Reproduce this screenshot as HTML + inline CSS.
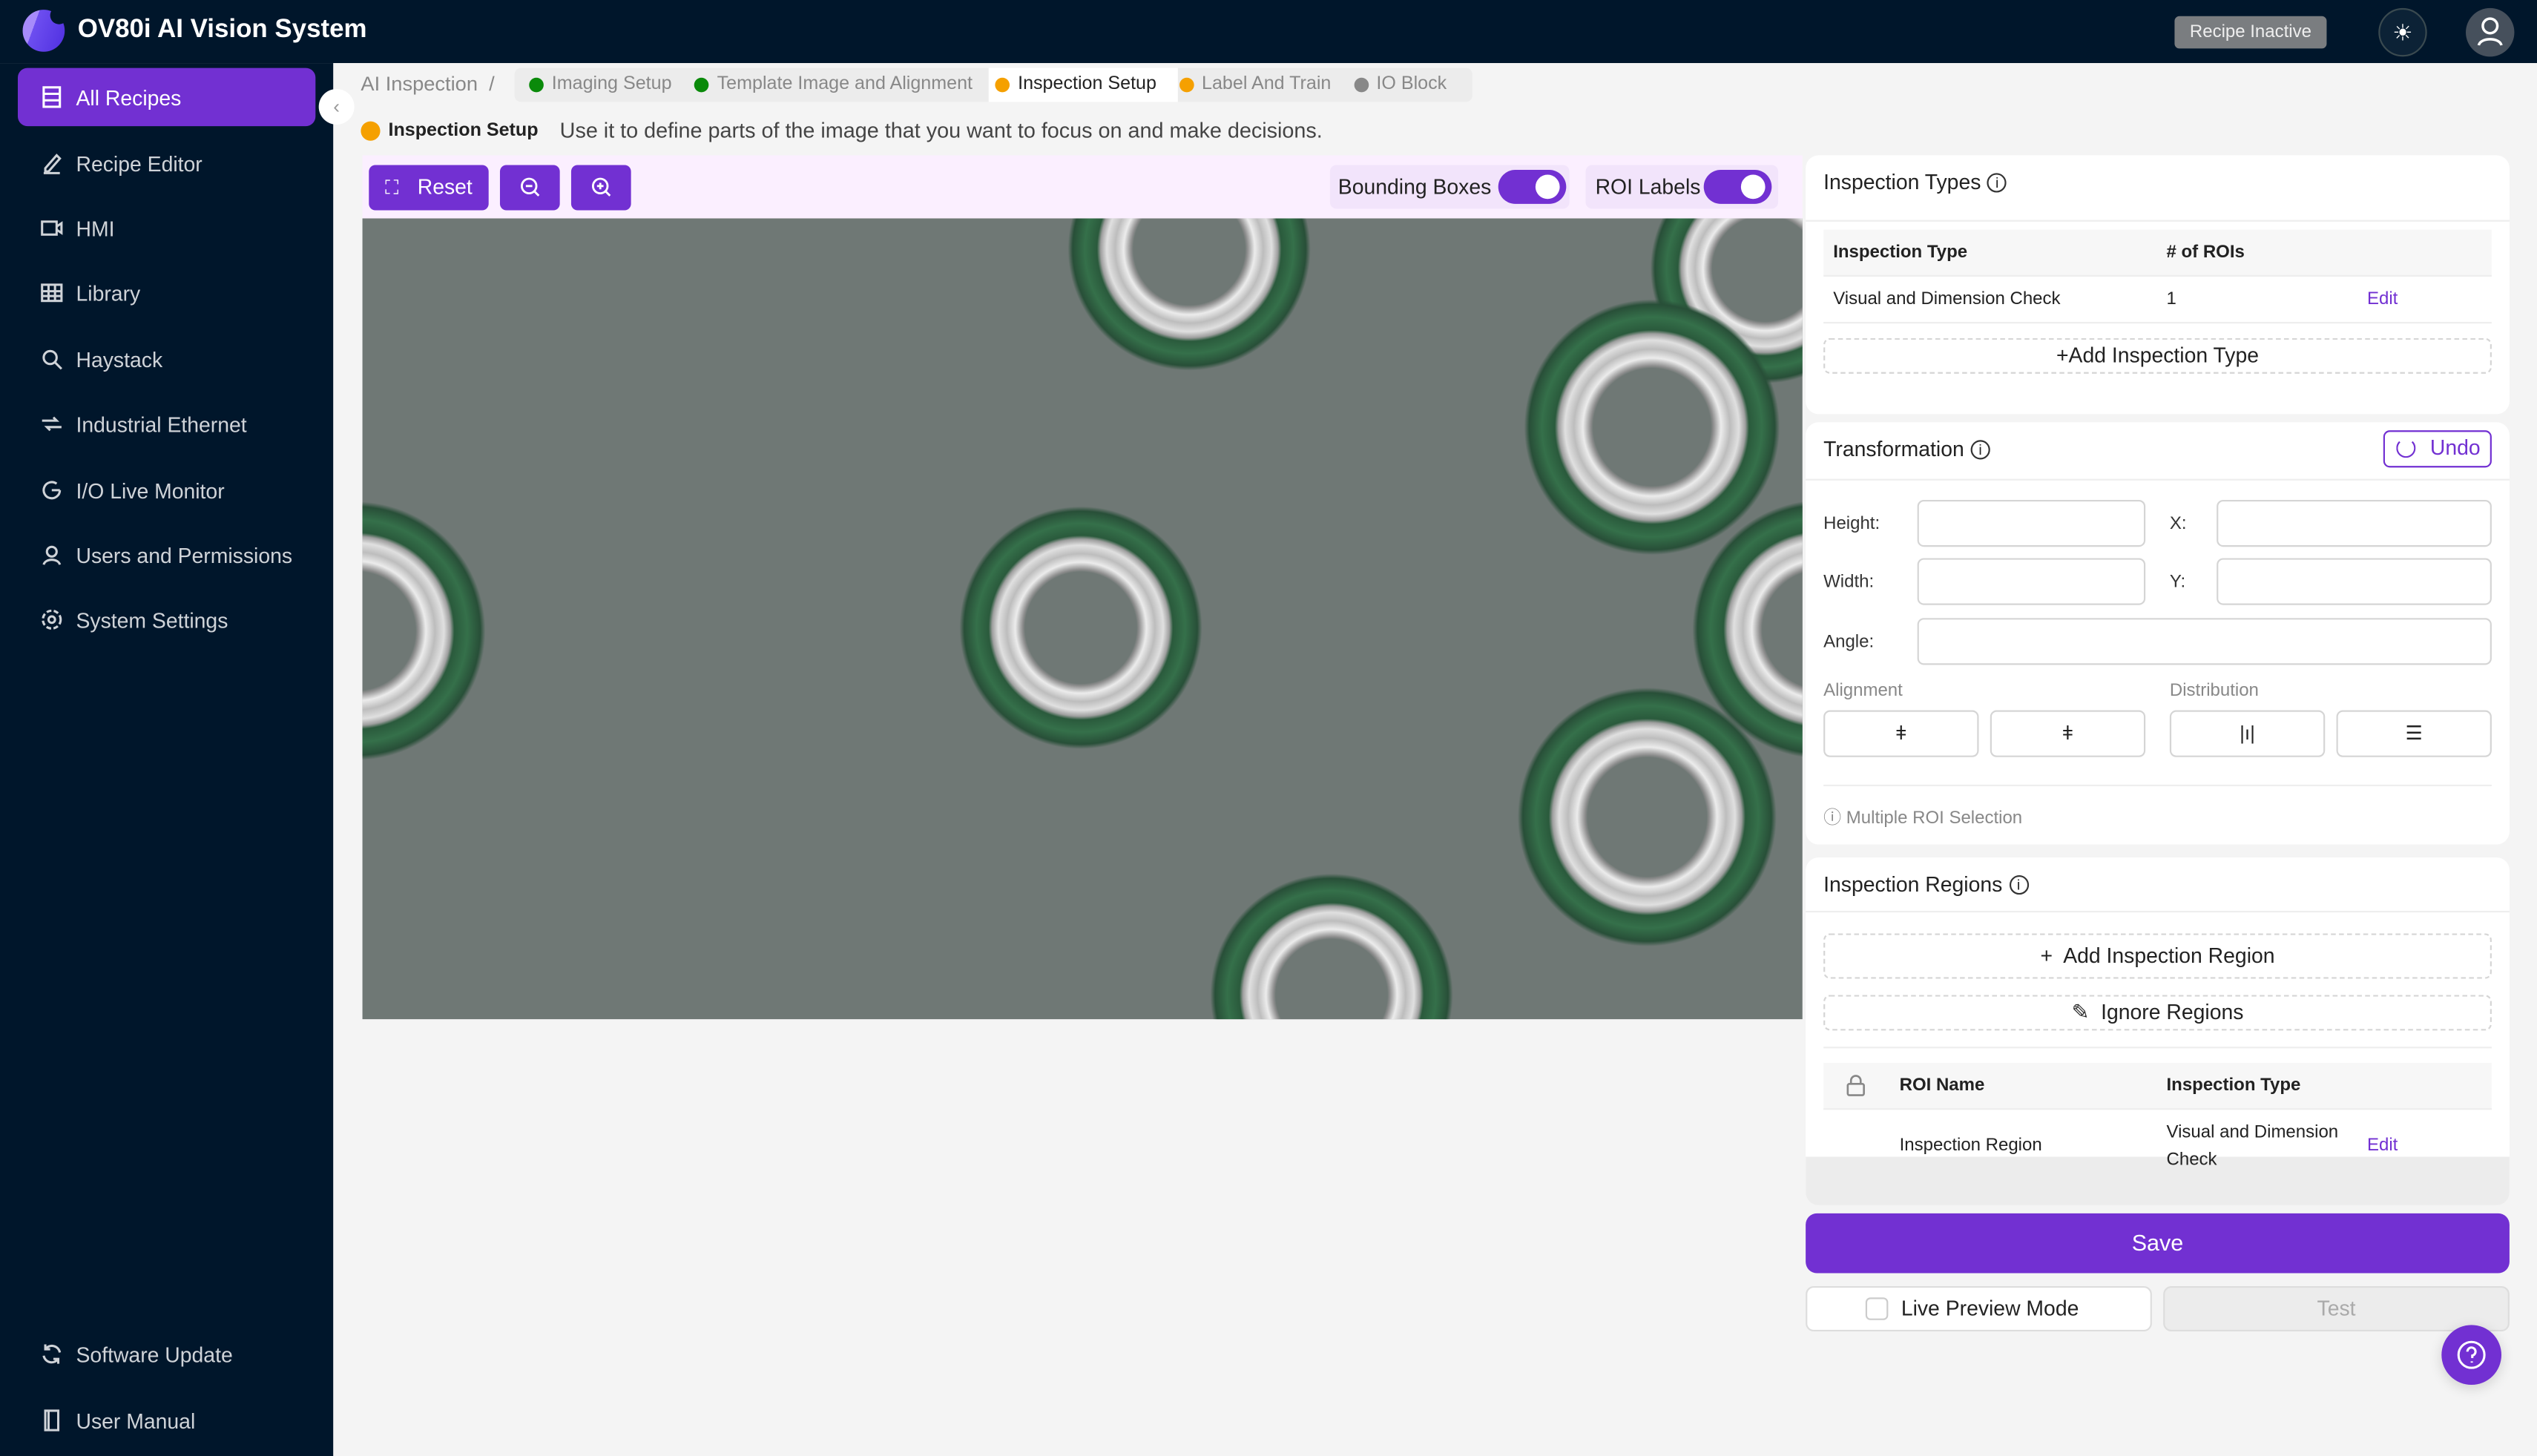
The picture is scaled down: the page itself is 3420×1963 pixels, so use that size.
<!DOCTYPE html>
<html><head><meta charset="utf-8"><style>
*{box-sizing:border-box;margin:0;padding:0}
html,body{width:3420px;height:1962px;overflow:hidden;background:#f4f4f4}
#w{position:absolute;left:0;top:0;width:1568px;height:900px;transform:scale(2.18112);transform-origin:0 0;font-family:"Liberation Sans",sans-serif;color:#222;background:#f4f4f4}
.a{position:absolute}
.top{left:0;top:0;width:1568px;height:39px;background:#00162b}
.side{left:0;top:39px;width:206px;height:861px;background:#00162b}
.nav{position:absolute;left:11px;width:184px;height:36px;border-radius:6px;color:#cfd3d8;font-size:13px;display:flex;align-items:center;padding-left:14px;gap:8px}
.nav svg{width:14px;height:14px;stroke:#cfd3d8;fill:none;stroke-width:1.4}
.card{position:absolute;background:#fff;border-radius:8px;left:1116px;width:435px}
.hd{font-size:13px;color:#222;display:flex;align-items:center;gap:4px}
.i{display:inline-block;width:12px;height:12px;border:1.2px solid #333;border-radius:50%;font-size:9px;text-align:center;line-height:10px}
.dash{position:absolute;border:1px dashed #d5d5d5;border-radius:4px;font-size:13px;text-align:center}
.inp{position:absolute;border:1px solid #d5d5d5;border-radius:4px;height:29px;background:#fff}
.lbl{position:absolute;font-size:11px;color:#333}
.btn{position:absolute;border:1px solid #d5d5d5;border-radius:4px;height:29px;background:#fff;text-align:center;font-size:12px;line-height:27px}
.ring{position:absolute;border-radius:50%;background:radial-gradient(circle closest-side,#6f7875 0 46%,#8e8e8e 48%,#ececec 54%,#bdbdbd 61%,#e0e0e0 68%,#9f9f9f 73%,#2a5a3c 76%,#35704a 86%,#284f38 96%,rgba(80,110,90,0) 100%)}
.tab{font-size:11.5px;color:#888;display:flex;align-items:center;gap:5px}
.dot{width:9px;height:9px;border-radius:50%;display:inline-block}
</style></head><body><div id="w">
<div class="a top"></div>
<div class="a" style="left:14px;top:6px;width:26px;height:26px;border-radius:50%;background:linear-gradient(110deg,#a78bfa 0 30%,#6d4ef0 30%,#4f2fe0)"></div>
<div class="a" style="left:31px;top:4px;width:11px;height:11px;border-radius:50%;background:#00162b"></div>
<div class="a" style="left:48px;top:10px;color:#fff;font-size:16px;font-weight:bold">OV80i AI Vision System</div>
<div class="a" style="left:1344px;top:10px;width:94px;height:20px;background:#7a7d80;border-radius:3px;color:#eee;font-size:11px;text-align:center;line-height:20px">Recipe Inactive</div>
<div class="a" style="left:1470px;top:5px;width:30px;height:30px;border-radius:50%;background:#0c2236;border:1px solid #3a4a50;color:#fff;text-align:center;line-height:28px;font-size:14px">☀</div>
<div class="a" style="left:1524px;top:5px;width:30px;height:30px;border-radius:50%;background:#46505c"><svg width="30" height="30" viewBox="0 0 30 30" fill="none" stroke="#fff" stroke-width="1.6"><circle cx="15" cy="11" r="4.5"/><path d="M8 23c1-5 13-5 14 0"/></svg></div>
<div class="a side"></div>
<div class="nav" style="top:42px;background:#7230d2;color:#fff"><svg viewBox="0 0 14 14" style="stroke:#fff"><rect x="2" y="1" width="10" height="12"/><path d="M2 5h10M2 9h10"/></svg>All Recipes</div>
<div class="nav" style="top:83px"><svg viewBox="0 0 14 14"><path d="M3 10l7-8 2 2-7 8H3zM2 13h10"/></svg>Recipe Editor</div>
<div class="nav" style="top:123px"><svg viewBox="0 0 14 14"><rect x="1" y="3" width="9" height="8"/><path d="M10 6l3-2v6l-3-2"/></svg>HMI</div>
<div class="nav" style="top:163px"><svg viewBox="0 0 14 14"><rect x="1" y="2" width="12" height="10"/><path d="M1 6h12M1 9h12M5 2v10M9 2v10"/></svg>Library</div>
<div class="nav" style="top:204px"><svg viewBox="0 0 14 14"><circle cx="6" cy="6" r="4"/><path d="M9 9l4 4"/></svg>Haystack</div>
<div class="nav" style="top:244px"><svg viewBox="0 0 14 14"><path d="M1 5h9l-2-2M13 9H4l2 2"/></svg>Industrial Ethernet</div>
<div class="nav" style="top:285px"><svg viewBox="0 0 14 14"><path d="M12 7a5 5 0 1 1-2-4M7 7h5"/></svg>I/O Live Monitor</div>
<div class="nav" style="top:325px"><svg viewBox="0 0 14 14"><circle cx="7" cy="5" r="3"/><path d="M2 13c1-4 9-4 10 0"/></svg>Users and Permissions</div>
<div class="nav" style="top:365px"><svg viewBox="0 0 14 14"><circle cx="7" cy="7" r="2"/><circle cx="7" cy="7" r="5.5" stroke-dasharray="3 1.5"/></svg>System Settings</div>
<div class="nav" style="top:819px"><svg viewBox="0 0 14 14"><path d="M12 6a5 5 0 0 0-9-2M2 8a5 5 0 0 0 9 2M3 1v3h3M11 13v-3H8"/></svg>Software Update</div>
<div class="nav" style="top:860px"><svg viewBox="0 0 14 14"><path d="M3 1h8v12H3zM5 1v12"/></svg>User Manual</div>
<div class="a" style="left:206px;top:39px;width:1362px;height:861px;background:#f4f4f4"></div>
<div class="a" style="left:197px;top:55px;width:22px;height:22px;border-radius:50%;background:#fff;color:#999;text-align:center;line-height:22px;font-size:12px">‹</div>
<div class="a" style="left:223px;top:45px;font-size:12.5px;color:#888">AI Inspection &nbsp;/</div>
<div class="a" style="left:318px;top:42px;width:592px;height:21px;background:#ececec;border-radius:4px"></div>
<div class="a" style="left:611px;top:42px;width:117px;height:21px;background:#fff"></div>
<div class="a" style="left:327px;top:46px;display:flex;gap:14px">
<span class="tab"><span class="dot" style="background:#0a8a0a"></span>Imaging Setup</span>
<span class="tab"><span class="dot" style="background:#0a8a0a"></span>Template Image and Alignment</span>
<span class="tab" style="color:#222"><span class="dot" style="background:#f5a000"></span>Inspection Setup</span>
<span class="tab"><span class="dot" style="background:#f5a000"></span>Label And Train</span>
<span class="tab"><span class="dot" style="background:#888"></span>IO Block</span></div>
<div class="a" style="left:223px;top:73px;font-size:12px;display:flex;align-items:center;gap:5px"><span class="dot" style="background:#f5a000;width:12px;height:12px"></span><b style="font-size:11.5px">Inspection Setup</b>&nbsp; <span style="color:#444;font-size:13.2px">Use it to define parts of the image that you want to focus on and make decisions.</span></div>
<div class="a" style="left:224px;top:96px;width:890px;height:39px;background:#fbefff"></div>
<div class="a" style="left:228px;top:102px;width:74px;height:28px;background:#7230d2;border-radius:4px;color:#fff;font-size:13px;line-height:28px;padding-left:30px">Reset</div>
<div class="a" style="left:238px;top:109px;color:#fff;font-size:12px">⛶</div>
<div class="a" style="left:309px;top:102px;width:37px;height:28px;background:#7230d2;border-radius:4px"><svg width="37" height="28" fill="none" stroke="#fff" stroke-width="1.3"><circle cx="18" cy="13" r="4.5"/><path d="M16 13h4M21 16l3 3"/></svg></div>
<div class="a" style="left:353px;top:102px;width:37px;height:28px;background:#7230d2;border-radius:4px"><svg width="37" height="28" fill="none" stroke="#fff" stroke-width="1.3"><circle cx="18" cy="13" r="4.5"/><path d="M16 13h4M18 11v4M21 16l3 3"/></svg></div>
<div class="a" style="left:822px;top:102px;width:148px;height:27px;background:#f2e4fb;border-radius:4px;font-size:13px;line-height:27px;padding-left:5px">Bounding Boxes</div>
<div class="a" style="left:926px;top:105px;width:42px;height:21px;background:#7230d2;border-radius:11px"><div class="a" style="left:23px;top:3px;width:15px;height:15px;border-radius:50%;background:#fff"></div></div>
<div class="a" style="left:980px;top:102px;width:119px;height:27px;background:#f2e4fb;border-radius:4px;font-size:13px;line-height:27px;padding-left:6px">ROI Labels</div>
<div class="a" style="left:1053px;top:105px;width:42px;height:21px;background:#7230d2;border-radius:11px"><div class="a" style="left:23px;top:3px;width:15px;height:15px;border-radius:50%;background:#fff"></div></div>
<div class="a" style="left:224px;top:135px;width:890px;height:495px;background:#6f7875;overflow:hidden">
<div class="ring" style="left:436px;top:-56px;width:150px;height:150px"></div>
<div class="ring" style="left:796px;top:-40px;width:142px;height:142px"></div>
<div class="ring" style="left:718px;top:50px;width:158px;height:158px"></div>
<div class="ring" style="left:367px;top:178px;width:154px;height:150px"></div>
<div class="ring" style="left:-84px;top:175px;width:160px;height:160px"></div>
<div class="ring" style="left:822px;top:174px;width:160px;height:160px"></div>
<div class="ring" style="left:714px;top:290px;width:160px;height:160px"></div>
<div class="ring" style="left:524px;top:405px;width:150px;height:150px"></div>
</div>
<div class="card" style="top:96px;height:160px"></div>
<div class="a hd" style="left:1127px;top:105px">Inspection Types <span class="i">i</span></div>
<div class="a" style="left:1116px;top:136px;width:435px;height:1px;background:#eee"></div>
<div class="a" style="left:1127px;top:142px;width:413px;height:29px;background:#f7f7f7;border-bottom:1px solid #eee;font-size:11px;font-weight:bold;line-height:29px"><span class="a" style="left:6px">Inspection Type</span><span class="a" style="left:212px">#&nbsp;of ROIs</span></div>
<div class="a" style="left:1127px;top:171px;width:413px;height:29px;border-bottom:1px solid #eee;font-size:11px;line-height:29px"><span class="a" style="left:6px">Visual and Dimension Check</span><span class="a" style="left:212px">1</span><span class="a" style="left:336px;color:#7230d2">Edit</span></div>
<div class="dash" style="left:1127px;top:209px;width:413px;height:22px;line-height:20px">+Add Inspection Type</div>
<div class="card" style="top:261px;height:261px"></div>
<div class="a hd" style="left:1127px;top:270px">Transformation <span class="i">i</span></div>
<div class="a" style="left:1473px;top:266px;width:67px;height:23px;border:1.5px solid #7230d2;border-radius:4px;color:#7230d2;font-size:13px;line-height:20px;text-align:right;padding-right:6px">Undo</div>
<div class="a" style="left:1481px;top:271px;width:12px;height:12px;border:1.5px solid #7230d2;border-top-color:transparent;border-radius:50%"></div>
<div class="a" style="left:1116px;top:296px;width:435px;height:1px;background:#eee"></div>
<div class="lbl" style="left:1127px;top:318px">Height:</div><div class="inp" style="left:1185px;top:309px;width:141px"></div>
<div class="lbl" style="left:1341px;top:318px">X:</div><div class="inp" style="left:1370px;top:309px;width:170px"></div>
<div class="lbl" style="left:1127px;top:354px">Width:</div><div class="inp" style="left:1185px;top:345px;width:141px"></div>
<div class="lbl" style="left:1341px;top:354px">Y:</div><div class="inp" style="left:1370px;top:345px;width:170px"></div>
<div class="lbl" style="left:1127px;top:391px">Angle:</div><div class="inp" style="left:1185px;top:382px;width:355px"></div>
<div class="lbl" style="left:1127px;top:421px;color:#888">Alignment</div><div class="lbl" style="left:1341px;top:421px;color:#888">Distribution</div>
<div class="btn" style="left:1127px;top:439px;width:96px">ǂ</div>
<div class="btn" style="left:1230px;top:439px;width:96px">ǂ</div>
<div class="btn" style="left:1341px;top:439px;width:96px">|ı|</div>
<div class="btn" style="left:1444px;top:439px;width:96px">☰</div>
<div class="a" style="left:1127px;top:485px;width:413px;height:1px;background:#eee"></div>
<div class="a" style="left:1127px;top:497px;font-size:11px;color:#888">ⓘ Multiple ROI Selection</div>
<div class="card" style="top:530px;height:215px;overflow:hidden"><div class="a" style="left:0;top:185px;width:435px;height:30px;background:#ececec"></div></div>
<div class="a hd" style="left:1127px;top:539px">Inspection Regions <span class="i">i</span></div>
<div class="a" style="left:1116px;top:563px;width:435px;height:1px;background:#eee"></div>
<div class="dash" style="left:1127px;top:577px;width:413px;height:28px;line-height:26px">+&nbsp; Add Inspection Region</div>
<div class="dash" style="left:1127px;top:615px;width:413px;height:22px;line-height:20px">✎&nbsp; Ignore Regions</div>
<div class="a" style="left:1127px;top:647px;width:413px;height:1px;background:#eee"></div>
<div class="a" style="left:1127px;top:657px;width:413px;height:29px;background:#f7f7f7;border-bottom:1px solid #eee;font-size:11px;font-weight:bold;line-height:29px"><svg class="a" style="left:14px;top:7px" width="12" height="14" fill="none" stroke="#888" stroke-width="1.2"><rect x="1" y="6" width="10" height="7" rx="1"/><path d="M3 6V4a3 3 0 0 1 6 0v2"/></svg><span class="a" style="left:47px">ROI Name</span><span class="a" style="left:212px">Inspection Type</span></div>
<div class="a" style="left:1174px;top:702px;font-size:11px">Inspection Region</div>
<div class="a" style="left:1339px;top:692px;font-size:11px;line-height:17px">Visual and Dimension<br>Check</div>
<div class="a" style="left:1463px;top:702px;font-size:11px;color:#7230d2">Edit</div>
<div class="a" style="left:1116px;top:750px;width:435px;height:37px;background:#7230d2;border-radius:7px;color:#fff;font-size:14px;text-align:center;line-height:37px">Save</div>
<div class="a" style="left:1116px;top:795px;width:214px;height:28px;background:#fff;border:1px solid #ddd;border-radius:5px;font-size:13px;line-height:26px;padding-left:58px">Live Preview Mode</div>
<div class="a" style="left:1153px;top:802px;width:14px;height:14px;border:1px solid #ccc;border-radius:3px"></div>
<div class="a" style="left:1337px;top:795px;width:214px;height:28px;background:#ececec;border:1px solid #ddd;border-radius:5px;font-size:13px;line-height:26px;text-align:center;color:#aaa">Test</div>
<div class="a" style="left:1509px;top:819px;width:37px;height:37px;border-radius:50%;background:#7230d2;box-shadow:0 2px 8px rgba(0,0,0,.15)"><svg width="37" height="37" fill="none" stroke="#fff" stroke-width="1.4"><circle cx="18.5" cy="18.5" r="8"/><path d="M16 16.5a2.5 2.5 0 1 1 3 2.4v1.6M18.7 22.5v.8"/></svg></div>
</div></body></html>
